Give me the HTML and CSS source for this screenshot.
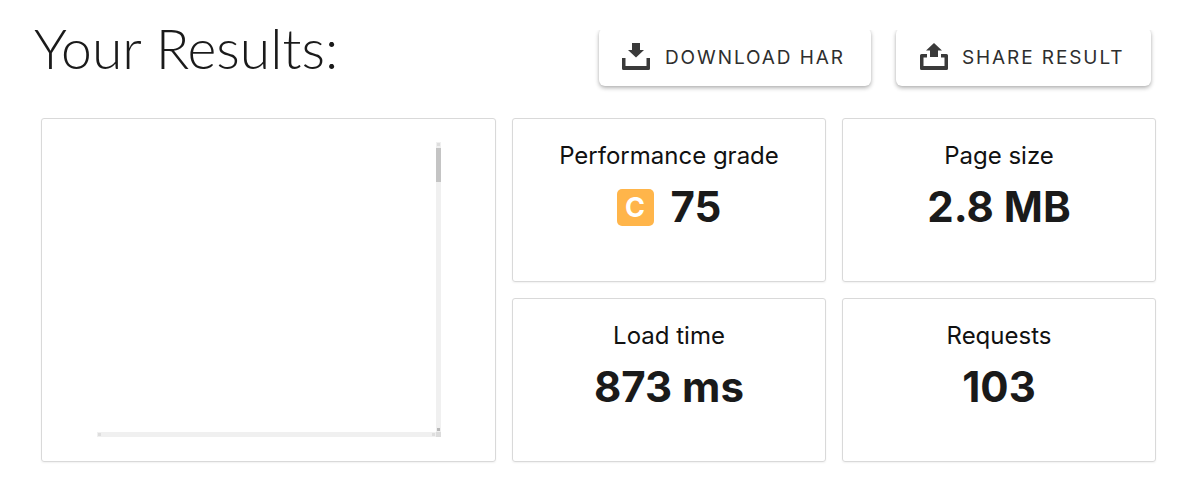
FILE: index.html
```html
<!DOCTYPE html>
<html>
<head>
    <title>Your Results</title>
    <meta charset="utf-8">
    <meta name="viewport" content="width=device-width, initial-scale=1">
    <link rel="stylesheet" href="styles.css">
</head>
<body>
<div class="header">
    <h1>Your Results:</h1>
    <div class="actions">
        <button class="btn btn-download">
            <svg class="icon" viewBox="0 0 28 28" width="28" height="28">
                <path d="M10 0h8v7h4l-8 7.500L6 7h4z"/>
                <path d="M0 15h3.500v8H24.500v-8H28v10.500a1.500 1.500 0 0 1-1.500 1.500h-25A1.500 1.500 0 0 1 0 25.500z"/>
            </svg>
            Download HAR
        </button>
        <button class="btn btn-share">
            <svg class="icon" viewBox="0 0 28 28" width="28" height="28">
                <path d="M14 0l8 7.500h-4V14h-8V7.500H6z"/>
                <path d="M1.500 11H7v3.500H3.500V23H24.500v-8.500H21V11h5.500A1.500 1.500 0 0 1 28 12.500v13a1.500 1.500 0 0 1-1.500 1.500h-25A1.500 1.500 0 0 1 0 25.500v-13A1.500 1.500 0 0 1 1.500 11z"/>
            </svg>
            Share Result
        </button>
    </div>
</div>

<div class="results">
    <div class="card card-preview">
        <div class="frame">
            <div class="frame-top">
                <div class="frame-view"></div>
                <div class="track-y">
                    <span class="arrow"></span>
                    <span class="thumb-y"></span>
                    <span class="arrow arrow-end"></span>
                </div>
            </div>
            <div class="frame-bottom">
                <div class="track-x">
                    <span class="arrow"></span>
                    <span class="arrow"></span>
                </div>
                <span class="corner"></span>
            </div>
        </div>
    </div>
    <div class="card">
        <div class="label">Performance grade</div>
        <div class="value">
            <span class="grade">C</span>
            <span>75</span>
        </div>
    </div>
    <div class="card">
        <div class="label">Page size</div>
        <div class="value">2.8 MB</div>
    </div>
    <div class="card">
        <div class="label">Load time</div>
        <div class="value">873 ms</div>
    </div>
    <div class="card">
        <div class="label">Requests</div>
        <div class="value">103</div>
    </div>
</div>
</body>
</html>
```

FILE: styles.css
```css
* {
    box-sizing: border-box;
}

body {
    font-family: Inter, "Liberation Sans", sans-serif;
    background-color: #fff;
    color: #1a1a1a;
    margin: 0;
    height: 491px;
    overflow: hidden;
}

.header {
    display: flex;
    justify-content: space-between;
    height: 118px;
    padding: 14px 36px 0 34px;
}

h1 {
    font-family: Lato, "Liberation Sans", sans-serif;
    font-weight: 300;
    font-size: 55.3px;
    line-height: 68px;
    margin: 0;
}

.actions {
    display: flex;
    gap: 25px;
    height: 58px;
    margin-top: 14px;
    clip-path: inset(2px -12px -12px -12px);
}

.btn {
    display: flex;
    align-items: center;
    height: 58px;
    padding: 0 0 0 23px;
    gap: 15px;
    background-color: #fff;
    color: #2e2e2e;
    border: none;
    border-radius: 6px;
    box-shadow: 0 2px 4px rgba(0, 0, 0, 0.3), 0 0 2px rgba(0, 0, 0, 0.08);
    font-family: inherit;
    font-size: 19px;
    font-weight: 400;
    letter-spacing: 1.9px;
    text-transform: uppercase;
    white-space: nowrap;
    cursor: pointer;
}

.btn-download {
    width: 272px;
}

.btn-share {
    width: 255px;
    padding-left: 24px;
    gap: 14px;
}

.icon {
    fill: #3a3a3a;
    flex: none;
}

.results {
    display: grid;
    grid-template-columns: 455px 314px 314px;
    grid-template-rows: 164px 164px;
    gap: 16px;
    padding-left: 41px;
}

.card {
    border: 1px solid #d9d9d9;
    border-radius: 3px;
    box-shadow: 0 1px 2px rgba(0, 0, 0, 0.06);
    padding-top: 21px;
    text-align: center;
}

.card-preview {
    grid-row: 1 / 3;
    padding: 23px 54px 0 55px;
}

.frame {
    width: 344px;
    height: 295px;
    display: flex;
    flex-direction: column;
}

.frame-top {
    flex: 1;
    display: flex;
}

.frame-view {
    flex: 1;
}

.track-y {
    width: 5px;
    background-color: #f0f0f0;
    display: flex;
    flex-direction: column;
    align-items: center;
}

.thumb-y {
    width: 5px;
    height: 34px;
    margin-top: 1px;
    background-color: #c4c4c4;
}

.arrow {
    width: 3px;
    height: 3px;
    flex: none;
    margin: 1px;
    background-color: #dedede;
}

.arrow-end {
    margin-top: auto;
    background-color: #b8b8b8;
}

.frame-bottom {
    display: flex;
    height: 5px;
}

.track-x {
    flex: 1;
    display: flex;
    justify-content: space-between;
    background-color: #f0f0f0;
}

.corner {
    width: 5px;
    background-color: #dcdcdc;
}

.label {
    font-size: 24px;
    line-height: 32px;
    color: #111;
}

.value {
    display: flex;
    justify-content: center;
    align-items: center;
    gap: 17px;
    font-size: 42px;
    font-weight: 700;
    line-height: 52px;
    margin-top: 9px;
}

.grade {
    width: 37px;
    height: 37px;
    background-color: #ffb54a;
    color: #fff;
    border-radius: 5px;
    font-size: 27px;
    font-weight: 700;
    line-height: 37px;
}
```
